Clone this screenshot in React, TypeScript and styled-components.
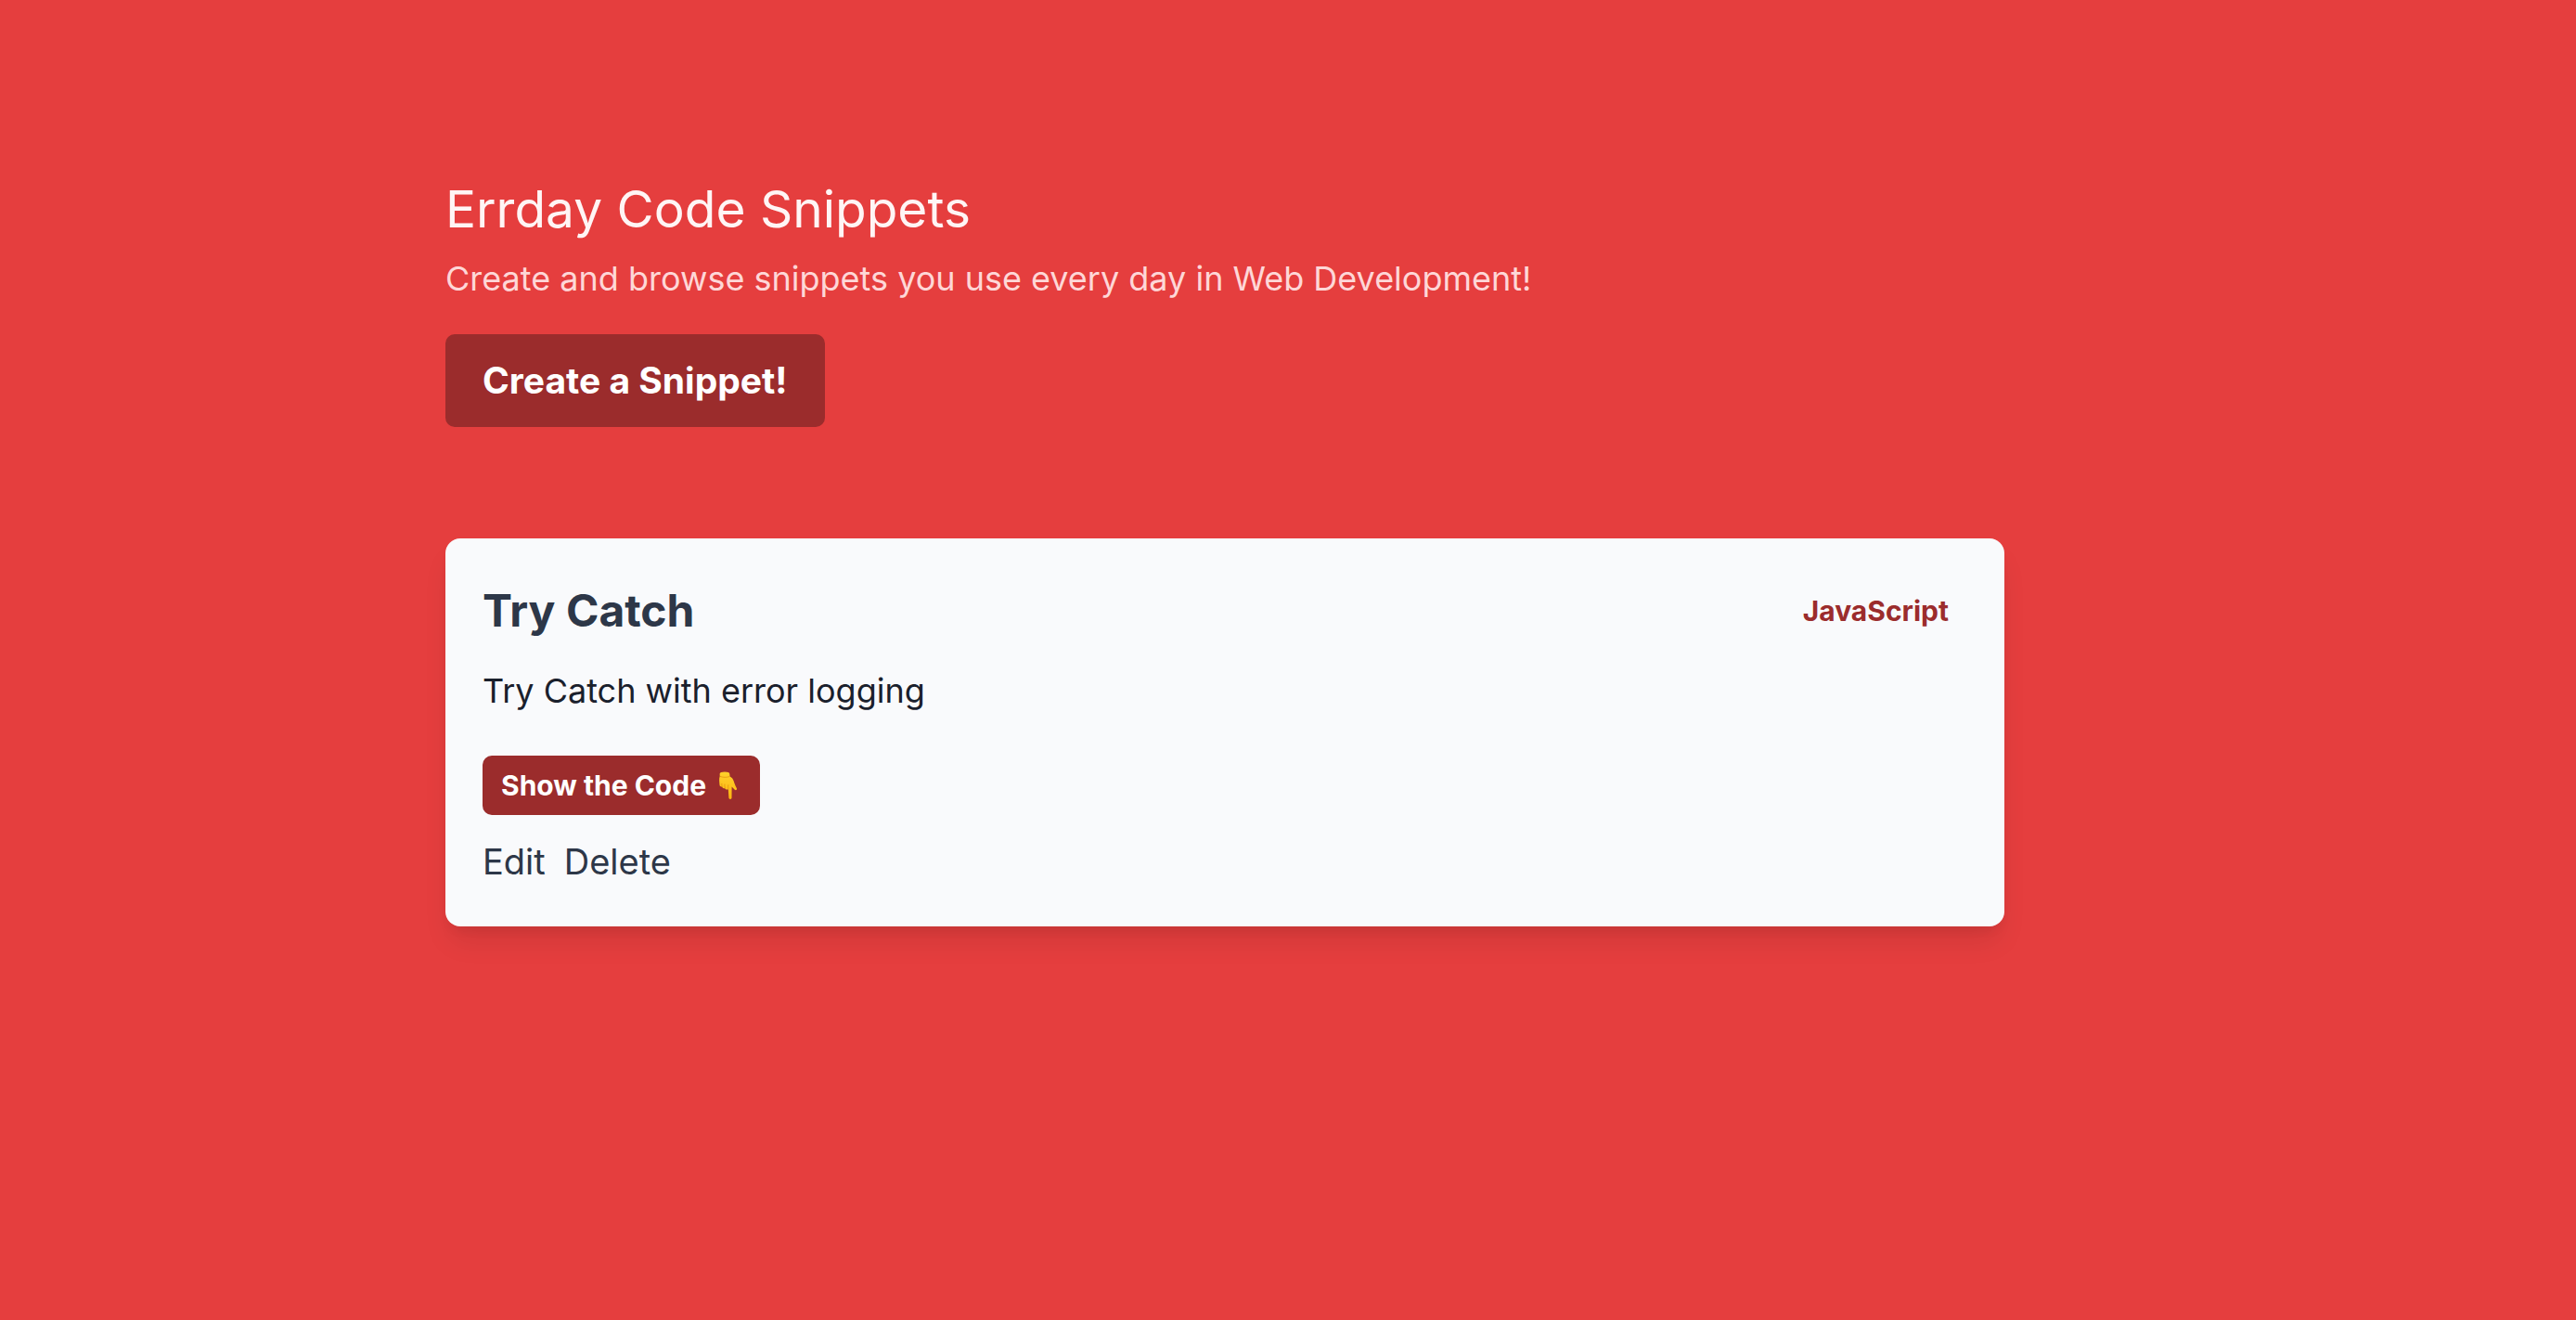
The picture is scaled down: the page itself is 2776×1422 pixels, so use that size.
import React from "react";
import styled, { createGlobalStyle } from "styled-components";

const GlobalStyle = createGlobalStyle`
  *, *::before, *::after {
    box-sizing: border-box;
  }

  body {
    margin: 0;
    min-height: 100vh;
    background: #e53e3e;
    color: #1a202c;
    font-family: Inter, "Liberation Sans", sans-serif;
    font-size: 36px;
    line-height: 60px;
  }

  h1, h2, p {
    margin: 0;
  }
`;

const Page = styled.main`
  max-width: 1896px;
  margin: 0 auto;
  padding: 180px 40px;
`;

const Content = styled.div`
  max-width: 1680px;
`;

const Header = styled.header`
  margin-bottom: 120px;
`;

const Title = styled.h1`
  color: #fff5f5;
  font-size: 55px;
  font-weight: 400;
  line-height: 90px;
`;

const Tagline = styled.p`
  margin-bottom: 30px;
  color: #fed7d7;
`;

const Button = styled.button<{ $small?: boolean }>`
  display: flex;
  align-items: center;
  gap: 4px;
  width: fit-content;
  padding: ${({ $small }) => ($small ? "8px 20px" : "20px 40px")};
  border: 0;
  border-radius: 10px;
  background: #9b2c2c;
  color: #fff;
  font-family: inherit;
  font-size: ${({ $small }) => ($small ? "30px" : "39px")};
  font-weight: 700;
  line-height: ${({ $small }) => ($small ? "48px" : "60px")};
  cursor: pointer;
`;

const Card = styled.article`
  padding: 40px;
  border-radius: 16px;
  background: #f9fafc;
  box-shadow:
    0 20px 30px -6px rgba(0, 0, 0, 0.1),
    0 8px 12px -4px rgba(0, 0, 0, 0.05);
`;

const CardHeader = styled.div`
  display: flex;
  align-items: center;
  justify-content: space-between;
  margin-bottom: 18px;
`;

const CardTitle = styled.h2`
  color: #2d3748;
  font-size: 48px;
  font-weight: 700;
  line-height: 76px;
`;

const Language = styled.span`
  padding: 0 20px;
  color: #9b2c2c;
  font-size: 30px;
  font-weight: 700;
`;

const Description = styled.p`
  margin-bottom: 40px;
`;

const Actions = styled.div`
  display: flex;
  gap: 20px;
  margin-top: 20px;
`;

const ActionLink = styled.a`
  color: #2d3748;
  font-size: 38px;
  text-decoration: none;
`;

const HandIcon = styled.svg`
  width: 34px;
  height: 32px;
`;

function PointingDown() {
  return (
    <HandIcon viewBox="0 0 34 32" role="img" aria-label="pointing down">
      <defs>
        <linearGradient id="skin" x1="0" y1="0" x2="0" y2="1">
          <stop offset="0" stopColor="#ffd12b" />
          <stop offset="1" stopColor="#fdb512" />
        </linearGradient>
      </defs>
      <path
        d="M10.600 3.800c0-1.600 2-2.300 5.400-2.300s5.300.7 5.300 2.300l.2 2.700c2.300 1 3.600 2.800 4.400 5.500.5 1.800 1.400 4 2.900 7 .8 1.700-.7 2.900-2 1.700l-3.200-3.200-.1 12c0 1.900-3 1.900-3.100 0l-.6-9.300c-1.700.8-3.100.2-3.500-.9-1.600.3-2.900-.4-3.100-1.700-1.600 0-2.700-.8-2.700-2.200-.2-3-.9-6.600.3-9.200z"
        fill="url(#skin)"
      />
      <path d="M10.800 6.300c3 1.300 7.300 1.400 10.500.2" fill="none" stroke="#ea9f14" strokeWidth="1" />
      <path
        d="M13.200 17.300c-.4-1-.5-2-.4-3M16.300 18.900c-.4-1.200-.5-2.500-.4-3.900M19.800 19.600c-.3-1.300-.3-2.500 0-3.800"
        fill="none"
        stroke="#e8990f"
        strokeWidth="0.9"
        strokeLinecap="round"
      />
    </HandIcon>
  );
}

export default function App() {
  return (
    <>
      <GlobalStyle />
      <Page>
        <Content>
          <Header>
            <Title>Errday Code Snippets</Title>
            <Tagline>Create and browse snippets you use every day in Web Development!</Tagline>
            <Button type="button">Create a Snippet!</Button>
          </Header>
          <Card>
            <CardHeader>
              <CardTitle>Try Catch</CardTitle>
              <Language>JavaScript</Language>
            </CardHeader>
            <Description>Try Catch with error logging</Description>
            <Button type="button" $small>
              Show the Code
              <PointingDown />
            </Button>
            <Actions>
              <ActionLink href="#edit">Edit</ActionLink>
              <ActionLink href="#delete">Delete</ActionLink>
            </Actions>
          </Card>
        </Content>
      </Page>
    </>
  );
}
